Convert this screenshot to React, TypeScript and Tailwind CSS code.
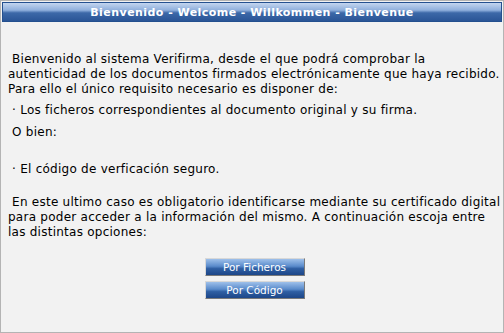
export default function App() {
  return (
    <div className="w-[504px] h-[333px] border border-[#b4b4b4] bg-[#f2f2f2] p-px font-['DejaVu_Sans',sans-serif] text-[12px] tracking-[0.25px] leading-[15px] text-black">
      <div className="h-[20px] border border-[#24508f] bg-[linear-gradient(#c3d5ef,#8fafdc_40%,#3c68a8_55%,#2a5596)] flex items-center justify-center text-white font-bold text-[11px] tracking-[0.45px]">
        Bienvenido - Welcome - Willkommen - Bienvenue
      </div>

      <div className="px-[6px] pt-[30px] whitespace-nowrap">
        <p>
          &nbsp;Bienvenido al sistema Verifirma, desde el que podrá comprobar la
          <br />
          autenticidad de los documentos firmados electrónicamente que haya recibido.
          <br />
          Para ello el único requisito necesario es disponer de:
        </p>
        <p className="mt-[6px]">&nbsp;· Los ficheros correspondientes al documento original y su firma.</p>
        <p className="mt-[7px]">&nbsp;O bien:</p>
        <p className="mt-[22px]">&nbsp;· El código de verficación seguro.</p>
        <p className="mt-[18px]">
          &nbsp;En este ultimo caso es obligatorio identificarse mediante su certificado digital
          <br />
          para poder acceder a la información del mismo. A continuación escoja entre
          <br />
          las distintas opciones:
        </p>
      </div>

      <div className="flex flex-col items-center gap-[5px] mt-[18px] pl-[5px]">
        <button className="w-[100px] h-[18px] border border-t-[#d8d8d8] border-l-[#d8d8d8] border-r-[#7a7a7a] border-b-[#7a7a7a] bg-[linear-gradient(#9ec0ea,#5a8bcb_45%,#2f5fa3_60%,#1d4688)] text-white text-[10.5px] tracking-normal leading-none">
          Por Ficheros
        </button>
        <button className="w-[100px] h-[18px] border border-t-[#d8d8d8] border-l-[#d8d8d8] border-r-[#7a7a7a] border-b-[#7a7a7a] bg-[linear-gradient(#9ec0ea,#5a8bcb_45%,#2f5fa3_60%,#1d4688)] text-white text-[10.5px] tracking-normal leading-none">
          Por Código
        </button>
      </div>
    </div>
  )
}
